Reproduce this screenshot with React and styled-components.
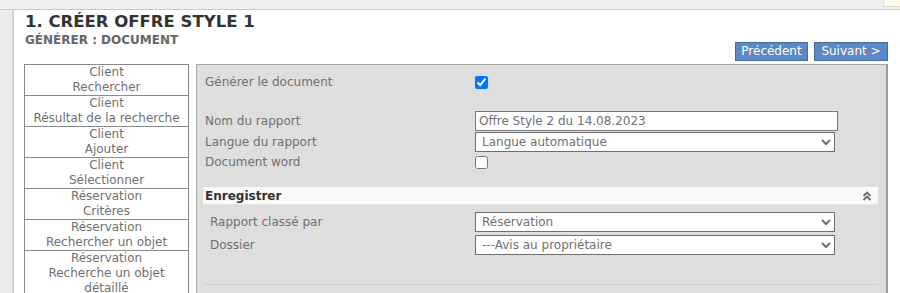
import React from "react";
import styled, { createGlobalStyle } from "styled-components";

const GlobalStyle = createGlobalStyle`
  html, body {
    margin: 0;
    padding: 0;
    background: #ffffff;
    overflow: hidden;
  }
  body {
    font-family: "DejaVu Sans", Verdana, sans-serif;
    font-size: 12px;
    color: #707070;
  }
`;

const Frame = styled.div`
  width: 900px;
  height: 293px;
  display: flex;
  flex-direction: column;
  overflow: hidden;
`;

const TopBar = styled.div`
  height: 9px;
  flex-shrink: 0;
  background: #efefef;
  border-bottom: 1px solid #c9c9c9;
  display: flex;
  justify-content: flex-end;
`;

const Notice = styled.div`
  width: 16px;
  height: 6px;
  background: #fffbe6;
  border: 1px solid #dddddd;
  border-top: none;
  border-right: none;
`;

const Body = styled.div`
  flex: 1;
  display: flex;
  min-height: 0;
`;

const LeftRail = styled.div`
  width: 12px;
  flex-shrink: 0;
  background: #ebebeb;
  border-right: 2px solid #d2d2d2;
`;

const Content = styled.div`
  flex: 1;
  padding: 2px 12px 0 10px;
  display: flex;
  flex-direction: column;
`;

const Title = styled.h1`
  margin: 0;
  font-size: 16.5px;
  line-height: 20px;
  font-weight: bold;
  color: #333333;
  padding-left: 1px;
`;

const SubRow = styled.div`
  display: flex;
  justify-content: space-between;
  align-items: flex-start;
`;

const Subtitle = styled.h2`
  margin: 1px 0 0;
  font-size: 12px;
  line-height: 15px;
  font-weight: bold;
  color: #666666;
  padding-left: 1px;
`;

const Buttons = styled.div`
  display: flex;
  gap: 6px;
  margin-top: 10px;
`;

const NavButton = styled.button`
  height: 19px;
  width: ${(p) => p.$w}px;
  padding: 0;
  background: #5c88c6;
  border: 1px solid #46699f;
  color: #ffffff;
  font-family: "DejaVu Sans", Verdana, sans-serif;
  font-size: 12px;
  line-height: 17px;
`;

const Main = styled.div`
  margin-top: 3px;
  display: grid;
  grid-template-columns: 165px 1fr;
  column-gap: 7px;
  align-items: start;
`;

const Nav = styled.ul`
  list-style: none;
  margin: 0;
  padding: 0;
  border: 1px solid #8a8a8a;
  border-bottom: none;
`;

const NavItem = styled.li`
  text-align: center;
  line-height: 15px;
  color: #707070;
  border-bottom: 1px solid #8a8a8a;
  white-space: pre-line;
`;

const Panel = styled.div`
  background: #dedede;
  border: 1px solid #a6a6a6;
  border-right: 2px solid #9a9a9a;
  padding: 8px 8px 20px 6px;
  min-height: 240px;
`;

const FormGrid = styled.div`
  display: grid;
  grid-template-columns: ${(p) => p.$label}px 1fr;
  align-items: center;
  row-gap: ${(p) => p.$gap}px;
  padding-left: ${(p) => p.$pad}px;
`;

const Label = styled.div`
  line-height: 19px;
  color: #707070;
`;

const Spacer = styled.div`
  grid-column: 1 / -1;
  height: ${(p) => p.$h}px;
`;

const Check = styled.input.attrs({ type: "checkbox" })`
  margin: 0;
  width: 13px;
  height: 13px;
  display: block;
`;

const TextInput = styled.input`
  width: 363px;
  height: 20px;
  box-sizing: border-box;
  border: 1px solid #7a7a7a;
  padding: 0 3px;
  font-family: "DejaVu Sans", Verdana, sans-serif;
  font-size: 12px;
  color: #707070;
  background: #ffffff;
  display: block;
`;

const Select = styled.select`
  width: 360px;
  height: 20px;
  box-sizing: border-box;
  border: 1px solid #6f6f6f;
  border-radius: 0;
  padding: 0 2px;
  font-family: "DejaVu Sans", Verdana, sans-serif;
  font-size: 12px;
  color: #707070;
  background: #ffffff;
  display: block;
`;

const Section = styled.div`
  margin-top: 15px;
  border-bottom: 1px solid #cfcfcf;
  padding-bottom: 29px;
`;

const SectionHeader = styled.div`
  display: flex;
  justify-content: space-between;
  align-items: center;
  height: 17px;
  background: #f9f9f9;
  border-bottom: 1px solid #e6e6e6;
  padding: 0 6px 0 2px;
  font-weight: bold;
  color: #333333;
`;

const SectionBody = styled.div`
  padding-top: 7px;
`;

const Chevrons = () => (
  <svg width="10" height="10" viewBox="0 0 10 10">
    <path d="M1.5 5 L5 1.5 L8.5 5" fill="none" stroke="#6e6e6e" strokeWidth="1.8" />
    <path d="M1.5 9 L5 5.5 L8.5 9" fill="none" stroke="#6e6e6e" strokeWidth="1.8" />
  </svg>
);

const navItems = [
  "Client\nRechercher",
  "Client\nRésultat de la recherche",
  "Client\nAjouter",
  "Client\nSélectionner",
  "Réservation\nCritères",
  "Réservation\nRechercher un objet",
  "Réservation\nRecherche un objet\ndétaillé",
];

export default function App() {
  return (
    <Frame>
      <GlobalStyle />
      <TopBar>
        <Notice />
      </TopBar>
      <Body>
        <LeftRail />
        <Content>
          <Title>1. CRÉER OFFRE STYLE 1</Title>
          <SubRow>
            <Subtitle>GÉNÉRER : DOCUMENT</Subtitle>
            <Buttons>
              <NavButton $w={73}>Précédent</NavButton>
              <NavButton $w={74}>Suivant &gt;</NavButton>
            </Buttons>
          </SubRow>
          <Main>
            <Nav>
              {navItems.map((item) => (
                <NavItem key={item}>{item}</NavItem>
              ))}
            </Nav>
            <Panel>
              <FormGrid $label={270} $pad={2} $gap={1}>
                <Label>Générer le document</Label>
                <div>
                  <Check defaultChecked />
                </div>
                <Spacer $h={17} />
                <Label>Nom du rapport</Label>
                <div>
                  <TextInput defaultValue="Offre Style 2 du 14.08.2023" />
                </div>
                <Label>Langue du rapport</Label>
                <div>
                  <Select defaultValue="auto">
                    <option value="auto">Langue automatique</option>
                  </Select>
                </div>
                <Label>Document word</Label>
                <div>
                  <Check />
                </div>
              </FormGrid>
              <Section>
                <SectionHeader>
                  <span>Enregistrer</span>
                  <Chevrons />
                </SectionHeader>
                <SectionBody>
                  <FormGrid $label={265} $pad={7} $gap={3}>
                    <Label>Rapport classé par</Label>
                    <div>
                      <Select defaultValue="res">
                        <option value="res">Réservation</option>
                      </Select>
                    </div>
                    <Label>Dossier</Label>
                    <div>
                      <Select defaultValue="avis">
                        <option value="avis">---Avis au propriétaire</option>
                      </Select>
                    </div>
                  </FormGrid>
                </SectionBody>
              </Section>
            </Panel>
          </Main>
        </Content>
      </Body>
    </Frame>
  );
}
